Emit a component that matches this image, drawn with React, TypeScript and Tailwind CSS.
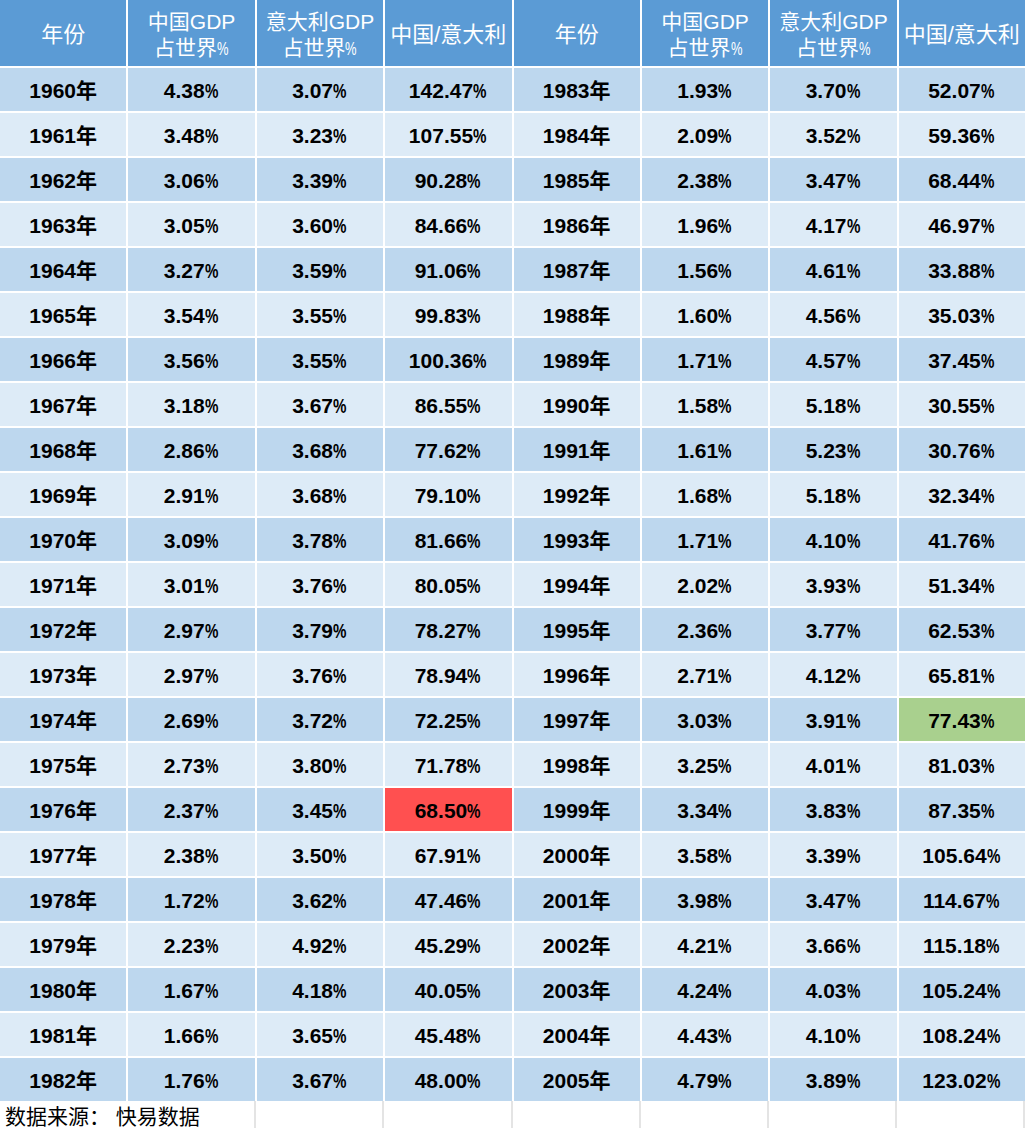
import React from "react";

const left: [string, string, string, string][] = [
  ["1960", "4.38", "3.07", "142.47"],
  ["1961", "3.48", "3.23", "107.55"],
  ["1962", "3.06", "3.39", "90.28"],
  ["1963", "3.05", "3.60", "84.66"],
  ["1964", "3.27", "3.59", "91.06"],
  ["1965", "3.54", "3.55", "99.83"],
  ["1966", "3.56", "3.55", "100.36"],
  ["1967", "3.18", "3.67", "86.55"],
  ["1968", "2.86", "3.68", "77.62"],
  ["1969", "2.91", "3.68", "79.10"],
  ["1970", "3.09", "3.78", "81.66"],
  ["1971", "3.01", "3.76", "80.05"],
  ["1972", "2.97", "3.79", "78.27"],
  ["1973", "2.97", "3.76", "78.94"],
  ["1974", "2.69", "3.72", "72.25"],
  ["1975", "2.73", "3.80", "71.78"],
  ["1976", "2.37", "3.45", "68.50"],
  ["1977", "2.38", "3.50", "67.91"],
  ["1978", "1.72", "3.62", "47.46"],
  ["1979", "2.23", "4.92", "45.29"],
  ["1980", "1.67", "4.18", "40.05"],
  ["1981", "1.66", "3.65", "45.48"],
  ["1982", "1.76", "3.67", "48.00"],
];

const right: [string, string, string, string][] = [
  ["1983", "1.93", "3.70", "52.07"],
  ["1984", "2.09", "3.52", "59.36"],
  ["1985", "2.38", "3.47", "68.44"],
  ["1986", "1.96", "4.17", "46.97"],
  ["1987", "1.56", "4.61", "33.88"],
  ["1988", "1.60", "4.56", "35.03"],
  ["1989", "1.71", "4.57", "37.45"],
  ["1990", "1.58", "5.18", "30.55"],
  ["1991", "1.61", "5.23", "30.76"],
  ["1992", "1.68", "5.18", "32.34"],
  ["1993", "1.71", "4.10", "41.76"],
  ["1994", "2.02", "3.93", "51.34"],
  ["1995", "2.36", "3.77", "62.53"],
  ["1996", "2.71", "4.12", "65.81"],
  ["1997", "3.03", "3.91", "77.43"],
  ["1998", "3.25", "4.01", "81.03"],
  ["1999", "3.34", "3.83", "87.35"],
  ["2000", "3.58", "3.39", "105.64"],
  ["2001", "3.98", "3.47", "114.67"],
  ["2002", "4.21", "3.66", "115.18"],
  ["2003", "4.24", "4.03", "105.24"],
  ["2004", "4.43", "4.10", "108.24"],
  ["2005", "4.79", "3.89", "123.02"],
];

const font = {
  fontFamily: '"Liberation Sans", "Noto Sans CJK SC", sans-serif',
};

function Pct({ v }: { v: string }) {
  return (
    <span>
      {v}
      <span className="inline-block scale-x-[0.72] origin-left -mr-[4px]">%</span>
    </span>
  );
}

function HeadCell({ children }: { children: React.ReactNode }) {
  return (
    <div className="h-[66px] bg-[#5b9bd5] text-white flex flex-col items-center justify-center pt-[4px] text-[21px] leading-[26px]">
      {children}
    </div>
  );
}

function Sub() {
  return (
    <span>
      占世界<span className="inline-block scale-x-[0.72] origin-left -mr-[4px] text-[18px]">%</span>
    </span>
  );
}

export default function App() {
  const headers = (
    <>
      <HeadCell><span className="text-[22px]">年份</span></HeadCell>
      <HeadCell>
        <span>中国GDP</span>
        <Sub />
      </HeadCell>
      <HeadCell>
        <span>意大利GDP</span>
        <Sub />
      </HeadCell>
      <HeadCell><span className="text-[22px]">中国/意大利</span></HeadCell>
    </>
  );

  return (
    <div className="w-[1025px] h-[1130px] bg-white" style={font}>
      <div className="grid grid-cols-8 gap-[2px] bg-white">
        <div className="contents">{headers}</div>
        <div className="contents">{headers}</div>
        {left.map((l, i) => {
          const r = right[i];
          const bg = i % 2 === 0 ? "bg-[#bdd7ee]" : "bg-[#ddebf7]";
          const cell = "h-[43px] flex items-center justify-center pt-[3px] text-[21px] font-bold text-black";
          return (
            <React.Fragment key={l[0]}>
              <div className={`${cell} ${bg}`}>{l[0]}年</div>
              <div className={`${cell} ${bg}`}><Pct v={l[1]} /></div>
              <div className={`${cell} ${bg}`}><Pct v={l[2]} /></div>
              <div className={`${cell} ${l[0] === "1976" ? "bg-[#ff5050]" : bg}`}><Pct v={l[3]} /></div>
              <div className={`${cell} ${bg}`}>{r[0]}年</div>
              <div className={`${cell} ${bg}`}><Pct v={r[1]} /></div>
              <div className={`${cell} ${bg}`}><Pct v={r[2]} /></div>
              <div className={`${cell} ${r[0] === "1997" ? "bg-[#a9d08e]" : bg}`}><Pct v={r[3]} /></div>
            </React.Fragment>
          );
        })}
      </div>
      <div className="grid grid-cols-8 h-[27px] bg-white">
        <div className="col-span-2 border-r-2 border-[#e4e4e4] flex items-center pl-[5px] pt-[3px] text-[21px] text-black leading-none whitespace-pre">
          数据来源： 快易数据
        </div>
        <div className="border-r-2 border-[#e4e4e4]" />
        <div className="border-r-2 border-[#e4e4e4]" />
        <div className="border-r-2 border-[#e4e4e4]" />
        <div className="border-r-2 border-[#e4e4e4]" />
        <div className="border-r-2 border-[#e4e4e4]" />
        <div className="border-r-2 border-[#e4e4e4]" />
      </div>
    </div>
  );
}
